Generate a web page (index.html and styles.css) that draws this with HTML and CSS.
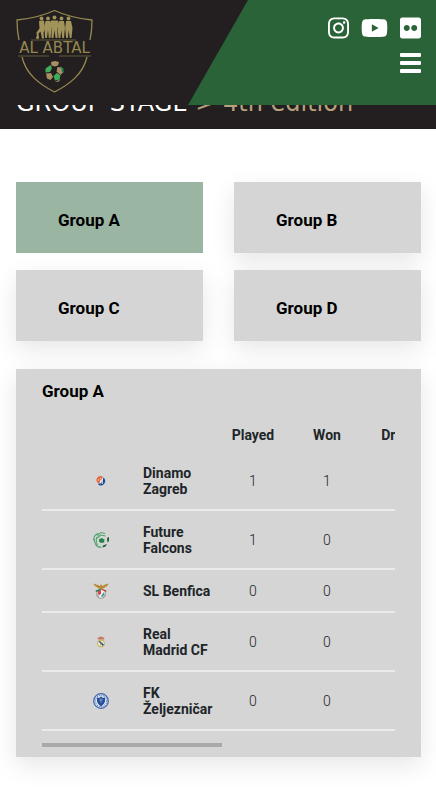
FILE: index.html
```html
<!DOCTYPE html>
<html lang="en">
<head>
    <meta charset="UTF-8">
    <meta name="viewport" content="width=device-width, initial-scale=1.0">
    <title>Al Abtal - Group Stage</title>
    <link rel="stylesheet" href="styles.css">
</head>
<body>

    <header class="header">
        <a class="logo" href="#" aria-label="Al Abtal">
            <svg width="82" height="86" viewBox="14 8 82 86" fill="none">
                <g stroke="#93874f" stroke-width="1.3">
                    <path d="M19 40Q17 31 17 20Q38 18 54.5 10.5Q71 18 92 20Q92 31 90 40"/>
                    <path d="M22 57C26 74 39 84 54.5 92C70 84 83 74 87 57"/>
                    <path d="M31 40H76M18 56H49M59 56H91" stroke="#625a38" stroke-width="1"/>
                </g>
                <!-- players -->
                <g fill="#a1935a">
                    <circle cx="41.5" cy="18.5" r="1.9"/><circle cx="48" cy="18.5" r="1.9"/><circle cx="54.5" cy="17.5" r="2"/><circle cx="61.5" cy="18.5" r="1.9"/><circle cx="68.5" cy="18.5" r="1.9"/>
                    <path d="M39 21l5-.5 1 8-1.5 4 .5 6h-2l-1.500-7-2 2 .5 4h-2l-.5-5 3-4z"/>
                    <path d="M45.5 21h5l1 7-1 10h-1.700l-.8-8-1 8h-1.800l-1-10z"/>
                    <path d="M51 20.5h7l1.500 5-2 2.500v10h-2l-1-8-1 8h-2v-10l-2-3z"/>
                    <path d="M59 21h5l1 7-1 10h-1.800l-.8-8-1 8h-1.800l-1-10z"/>
                    <path d="M66 21h5l1.500 7-1 10h-1.800l-.9-8-1 8h-1.700l-1-10z"/>
                    <circle cx="37.5" cy="37.5" r="1.5"/>
                </g>
                <text class="logo-text" x="54.5" y="53" text-anchor="middle">AL ABTAL</text>
                <!-- ball -->
                <g fill="#a68f62">
                    <path d="M51 62l4-1 4 1-1 3.500-3.500 1-3-1z"/>
                    <path d="M57.500 67l4 .5 2 4.500-3 3-4-3.500z"/>
                    <path d="M46 73.500l5-.5 2 4-2.500 3-3.500-1.500z"/>
                    <path d="M55 82l5.500-3-1.500 2.500z"/>
                </g>
                <path d="M60.500 66l3 2.500v4.500l-1.500-1-1-4z" fill="#208248"/>
                <g fill="#3eae59">
                    <path d="M50.500 65l1.500 3-2 4-4.500.5v-4z"/>
                    <path d="M53.500 76l3.500-3 3.500 2.500-1 4-4.500 1z"/>
                </g>
            </svg>
        </a>
        <nav class="nav">
            <div class="social">
                <a href="#" aria-label="Instagram"><svg height="24" viewBox="0 0 448 512"><path d="M224.1 141c-63.6 0-114.9 51.3-114.9 114.9s51.3 114.9 114.9 114.9S339 319.5 339 255.9 287.7 141 224.1 141zm0 189.6c-41.1 0-74.7-33.5-74.7-74.7s33.5-74.7 74.7-74.7 74.7 33.5 74.7 74.7-33.6 74.7-74.7 74.7zm146.4-194.3c0 14.9-12 26.8-26.8 26.8-14.9 0-26.8-12-26.8-26.8s12-26.8 26.8-26.8 26.8 12 26.8 26.8zm76.1 27.2c-1.7-35.9-9.9-67.7-36.2-93.9-26.2-26.2-58-34.4-93.9-36.2-37-2.1-147.9-2.1-184.9 0-35.8 1.7-67.6 9.9-93.9 36.1s-34.4 58-36.2 93.9c-2.1 37-2.1 147.9 0 184.9 1.7 35.9 9.9 67.7 36.2 93.9s58 34.4 93.9 36.2c37 2.1 147.9 2.1 184.9 0 35.9-1.7 67.7-9.9 93.9-36.2 26.2-26.2 34.4-58 36.2-93.9 2.1-37 2.1-147.8 0-184.8zM398.8 388c-7.8 19.6-22.9 34.7-42.6 42.6-29.5 11.7-99.5 9-132.1 9s-102.7 2.6-132.1-9c-19.6-7.8-34.7-22.9-42.6-42.6-11.7-29.5-9-99.5-9-132.1s-2.6-102.7 9-132.1c7.8-19.6 22.9-34.7 42.6-42.6 29.5-11.7 99.5-9 132.1-9s102.7-2.6 132.1 9c19.6 7.8 34.7 22.9 42.6 42.6 11.7 29.5 9 99.5 9 132.1s2.7 102.7-9 132.1z"/></svg></a>
                <a href="#" aria-label="YouTube"><svg height="24" viewBox="0 0 576 512"><path d="M549.655 124.083c-6.281-23.65-24.787-42.276-48.284-48.597C458.781 64 288 64 288 64S117.22 64 74.629 75.486c-23.497 6.322-42.003 24.947-48.284 48.597-11.412 42.867-11.412 132.305-11.412 132.305s0 89.438 11.412 132.305c6.281 23.65 24.787 41.5 48.284 47.821C117.22 448 288 448 288 448s170.78 0 213.371-11.486c23.497-6.321 42.003-24.171 48.284-47.821 11.412-42.867 11.412-132.305 11.412-132.305s0-89.438-11.412-132.305zm-317.51 213.508V175.185l142.739 81.205-142.739 81.201z"/></svg></a>
                <a href="#" aria-label="Flickr"><svg height="24" viewBox="0 0 448 512"><path d="M400 32H48C21.5 32 0 53.5 0 80v352c0 26.5 21.5 48 48 48h352c26.5 0 48-21.5 48-48V80c0-26.5-21.5-48-48-48zM144.5 319c-35.1 0-63.5-28.4-63.5-63.5s28.4-63.5 63.5-63.5 63.5 28.4 63.5 63.5-28.4 63.5-63.5 63.5zm159 0c-35.1 0-63.5-28.4-63.5-63.5s28.4-63.5 63.5-63.5 63.5 28.4 63.5 63.5-28.4 63.5-63.5 63.5z"/></svg></a>
            </div>
            <button class="menu-btn" aria-label="Menu">
                <span></span>
                <span></span>
                <span></span>
            </button>
        </nav>
    </header>

    <section class="hero">
        <h1><span class="title">Group Stage</span> <span class="edition">&gt; 4th edition</span></h1>
    </section>

    <main class="content">
        <div class="groups">
            <button class="group active">Group A</button>
            <button class="group">Group B</button>
            <button class="group">Group C</button>
            <button class="group">Group D</button>
        </div>

        <section class="standings">
            <h2>Group A</h2>
            <div class="table-scroll">
                <table>
                    <thead>
                        <tr>
                            <th class="pos"></th>
                            <th class="crest"></th>
                            <th class="team"></th>
                            <th>Played</th>
                            <th>Won</th>
                            <th>Drawn</th>
                            <th>Lost</th>
                            <th>GF</th>
                            <th>GA</th>
                            <th>Points</th>
                        </tr>
                    </thead>
                    <tbody>
                        <tr>
                            <td></td>
                            <td class="crest">
                                <svg width="16" height="16" viewBox="0 0 16 16">
                                    <circle cx="8" cy="8" r="4" fill="#e9dfdc"/>
                                    <path d="M4 9a4 4 0 0 1 6-5L5.500 11z" fill="#e2673f"/>
                                    <path d="M5 6l1 1-1 1zM7 4.500l1 1-1 1zM7 7l1 1-1 1z" fill="#fff"/>
                                    <path d="M10.500 4.500A4.200 4.200 0 1 1 5 11.500l2-1.500 1 1z" fill="#1d4b91"/>
                                    <path d="M7 10l2.500-4v5" stroke="#dfe5ee" stroke-width=".8" fill="none"/>
                                </svg>
                            </td>
                            <td class="team">Dinamo Zagreb</td>
                            <td>1</td><td>1</td><td>0</td><td>0</td><td>2</td><td>0</td><td>3</td>
                        </tr>
                        <tr>
                            <td></td>
                            <td class="crest">
                                <svg width="16" height="16" viewBox="0 0 16 16">
                                    <g fill="none" stroke="#46a265" stroke-width="1.1">
                                        <path d="M12 1.500C8 0 5.500 1 4.500 4"/>
                                        <path d="M5 1.500C1.500 3 .5 5.500 1 8"/>
                                        <path d="M1 7c0 4 2 5 4 5.500"/>
                                        <path d="M2.500 12c1 2.500 3 3.500 6 3M4.500 6l3-3 5 1M4 5c-1 2-1 4 0 5.500"/>
                                    </g>
                                    <path d="M6 7.500L8.500 6l3 1.500L11 10.500l-3 .5-2-1.500z" fill="#248247"/>
                                    <path d="M14 6l2-1v4l-1.500 1.500zM10 13.500l4-1.500-1.500 2.500-3 1z" fill="#185f34"/>
                                </svg>
                            </td>
                            <td class="team">Future Falcons</td>
                            <td>1</td><td>0</td><td>0</td><td>1</td><td>0</td><td>2</td><td>0</td>
                        </tr>
                        <tr>
                            <td></td>
                            <td class="crest">
                                <svg width="16" height="16" viewBox="0 0 16 16">
                                    <circle cx="8" cy="11" r="5" fill="#a3a6a6"/>
                                    <path d="M4.500 7h7v4q-1 3-3.500 4-2.500-1-3.500-4z" fill="#f4eeee"/>
                                    <path d="M5 7.500h3v3l-2 2-1-2z" fill="#d94442"/>
                                    <path d="M8 13l3-4v3l-2 2z" fill="#329aa0"/>
                                    <path d="M2.500 7.500L7 6l2 1-6 2z" fill="#2c7951"/>
                                    <path d="M9 6l4.500 1.500-.5 1.500-4-2z" fill="#c73335"/>
                                    <path d="M0 .5l5 1.500 2 1 1-2 1.500 2L12 1.500l4-1-2 2.500-3 2-3 1.500L5 5 2 3z" fill="#b68a36"/>
                                </svg>
                            </td>
                            <td class="team">SL Benfica</td>
                            <td>0</td><td>0</td><td>0</td><td>0</td><td>0</td><td>0</td><td>0</td>
                        </tr>
                        <tr>
                            <td></td>
                            <td class="crest">
                                <svg width="16" height="16" viewBox="0 0 16 16">
                                    <circle cx="8" cy="9.500" r="3.500" fill="#f3edcf" stroke="#c5ad52"/>
                                    <path d="M5.500 7.500l1.500-.5 4 3.500-1.500 1.500z" fill="#315d99"/>
                                    <path d="M7 11.500l2-3" stroke="#a98d3c" stroke-width=".8"/>
                                    <path d="M5 5.500L4.500 4l2-1L8 2.500 9.500 3l2 1-.5 1.500z" fill="#cb7965"/>
                                </svg>
                            </td>
                            <td class="team">Real Madrid CF</td>
                            <td>0</td><td>0</td><td>0</td><td>0</td><td>0</td><td>0</td><td>0</td>
                        </tr>
                        <tr>
                            <td></td>
                            <td class="crest">
                                <svg width="16" height="16" viewBox="0 0 16 16">
                                    <circle cx="8" cy="8" r="7.300" fill="#dce4f1" stroke="#3e63a8" stroke-width="1.200"/>
                                    <circle cx="8" cy="8" r="5.700" fill="none" stroke="#6583bb" stroke-width="1.200" stroke-dasharray="1 1"/>
                                    <path d="M4 4.500l2 .5 2-1.500 2 1.500 2-.5v4q-1 3-4 5-3-2-4-5z" fill="#244e9c"/>
                                    <path d="M8 5v5M6 7h4" stroke="#90a7d0" stroke-width=".8"/>
                                </svg>
                            </td>
                            <td class="team">FK Željezničar</td>
                            <td>0</td><td>0</td><td>0</td><td>0</td><td>0</td><td>0</td><td>0</td>
                        </tr>
                    </tbody>
                </table>
            </div>
            <div class="scroll-track"><div class="scroll-thumb"></div></div>
        </section>
    </main>

    <script>
        const tableScroll = document.querySelector(".table-scroll");
        const thumb = document.querySelector(".scroll-thumb");

        // keep the bar under the table in step with the scroll position
        function updateThumb() {
            thumb.style.width = (tableScroll.clientWidth / tableScroll.scrollWidth * 100) + "%";
            thumb.style.marginLeft = (tableScroll.scrollLeft / tableScroll.scrollWidth * 100) + "%";
        }

        tableScroll.addEventListener("scroll", updateThumb);
        window.addEventListener("resize", updateThumb);
        updateThumb();
    </script>

</body>
</html>
```
FILE: styles.css
```css
* {
    box-sizing: border-box;
}
body {
    margin: 0;
    font-family: Roboto, "Liberation Sans", sans-serif;
    background-color: #fff;
    color: #212529;
}
.header {
    position: fixed;
    top: 0;
    left: 0;
    z-index: 10;
    width: 100%;
    height: 105px;
    display: flex;
    justify-content: space-between;
    background-color: #231f20;
}
.logo {
    padding: 8px 0 0 14px;
}
.logo svg {
    display: block;
}
.logo-text {
    font-family: "DejaVu Sans", sans-serif;
    font-size: 15px;
    fill: #93874f;
}
.nav {
    width: 248px;
    padding: 16px 15px 0 0;
    display: flex;
    flex-direction: column;
    align-items: flex-end;
    gap: 13px;
    background-color: #296337;
    clip-path: polygon(60px 0, 100% 0, 100% 100%, 0 100%);
}
.social {
    display: flex;
    gap: 12px;
}
.social svg {
    display: block;
    fill: #fff;
}
.menu-btn {
    width: 21px;
    padding: 0;
    border: none;
    background: none;
    display: flex;
    flex-direction: column;
    gap: 4px;
    cursor: pointer;
}
.menu-btn span {
    width: 100%;
    height: 4px;
    background-color: #fff;
    border-radius: 1px;
}

/* page title, scrolls under the fixed header */
.hero {
    padding: 91px 16px 14px;
    background-color: #231f20;
}
.hero h1 {
    margin: 0;
    font-family: "DejaVu Sans", sans-serif;
    font-size: 24px;
    font-weight: 400;
    line-height: 24px;
    white-space: nowrap;
    color: #fff;
}
.title {
    text-transform: uppercase;
}
.edition {
    color: #b7a27b;
}

.content {
    padding: 53px 15px 42px 16px;
}
.groups {
    display: grid;
    grid-template-columns: 1fr 1fr;
    gap: 17px 31px;
    margin-bottom: 28px;
}
.group {
    height: 71px;
    padding: 4px 42px 0;
    border: none;
    background-color: #d5d5d5;
    box-shadow: 0 8px 24px rgba(0, 0, 0, 0.1);
    font-family: inherit;
    font-size: 17px;
    font-weight: bold;
    text-align: left;
    color: #000;
    cursor: pointer;
}
.group.active {
    background-color: #9ab5a2;
    box-shadow: none;
}

.standings {
    padding: 10px 26px;
    background-color: #d5d5d5;
    box-shadow: 0 8px 24px rgba(0, 0, 0, 0.1);
}
.standings h2 {
    margin: 0 0 15px;
    font-size: 17px;
    line-height: 24px;
    color: #000;
}
.table-scroll {
    overflow-x: auto;
    scrollbar-width: none;
}
.scroll-track {
    margin-top: 12px;
}
.scroll-thumb {
    height: 4px;
    background-color: #a9a9a9;
}
table {
    width: 692px;
    table-layout: fixed;
    border-collapse: separate;
    border-spacing: 0;
    font-size: 14px;
    line-height: 16px;
}
th {
    height: 34px;
    padding: 0;
}
td {
    padding: 13px 0 12px;
    border-bottom: 2px solid #ebebeb;
    font-weight: 300;
    text-align: center;
}
.pos {
    width: 42px;
}
.crest {
    width: 33px;
}
.crest svg {
    display: block;
    margin: 0 auto;
}
.team {
    width: 99px;
    padding-left: 26px;
    font-weight: bold;
    text-align: left;
}
```
